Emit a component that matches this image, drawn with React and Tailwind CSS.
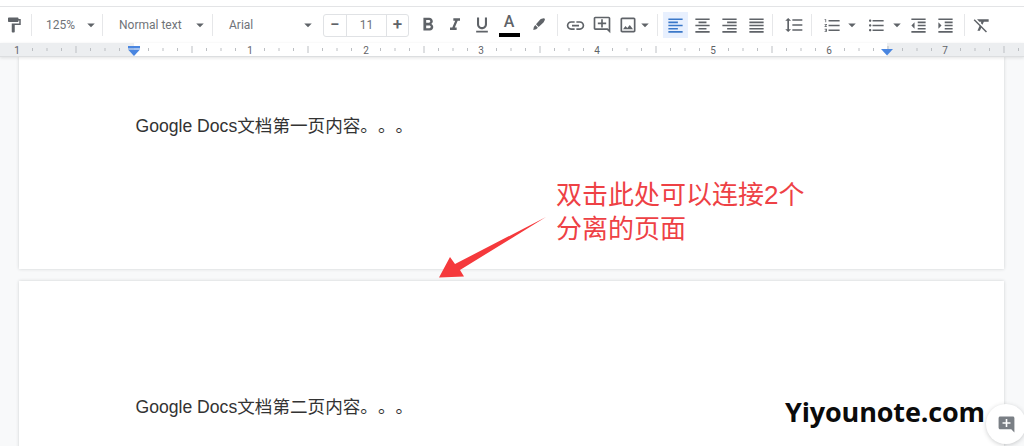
import {
  MdAddComment,
  MdArrowDropDown,
  MdFormatAlignCenter,
  MdFormatAlignJustify,
  MdFormatAlignLeft,
  MdFormatAlignRight,
  MdFormatBold,
  MdFormatClear,
  MdFormatIndentDecrease,
  MdFormatIndentIncrease,
  MdFormatItalic,
  MdFormatLineSpacing,
  MdFormatListBulleted,
  MdFormatListNumbered,
  MdFormatPaint,
  MdFormatUnderlined,
  MdLink,
  MdOutlineAddComment,
  MdOutlineImage,
} from "react-icons/md";

function Sep({ className = "" }) {
  return <div className={`h-[22px] w-px shrink-0 bg-[#e6e7e9] ${className}`} />;
}

function Tool({ icon: Icon, size = 19, className = "" }) {
  return (
    <div className={`flex h-[26px] w-[26px] shrink-0 items-center justify-center text-[#5f6368] ${className}`}>
      <Icon size={size} />
    </div>
  );
}

function Caret({ className = "" }) {
  return <MdArrowDropDown size={18} className={`shrink-0 text-[#5f6368] ${className}`} />;
}

function Select({ label, width, textWidth }) {
  return (
    <div className={`flex shrink-0 items-center pl-4 pr-[2px] text-[12px] text-[#6f7378] ${width}`}>
      <span className={textWidth}>{label}</span>
      <Caret />
    </div>
  );
}

// pen used for the highlight colour button
function Highlighter() {
  return (
    <svg width="16" height="16" viewBox="0 0 16 16" fill="#5f6368">
      <path d="M9.2 3.6a2.2 2.2 0 0 1 1.5-.9l2-.4c.9-.1 1.5.8 1.1 1.6l-.9 1.9a2.4 2.4 0 0 1-.7.9L7.6 11 5 8.2z" />
      <path d="M4.3 9l2.6 2.8-1.7 1.5-2.9.7.5-3z" />
    </svg>
  );
}

function Toolbar() {
  return (
    <div className="flex h-[37px] items-center border-t border-[#e3e4e6] bg-white [font-family:Roboto,sans-serif]">
      <Tool icon={MdFormatPaint} size={18} className="ml-px" />
      <Sep className="ml-1" />
      <div className="flex w-[70px] shrink-0 items-center pl-[14px] text-[12px] text-[#6f7378]">
        <span className="w-[36px]">125%</span>
        <Caret />
      </div>
      <Sep />
      <Select label="Normal text" width="w-[109px]" textWidth="w-[72px]" />
      <Sep />
      <Select label="Arial" width="w-[106px]" textWidth="w-[79px]" />

      <div className="ml-[4px] flex h-[23px] w-[86px] shrink-0 items-center rounded-[3px] border border-[#e0e2e5] text-[#5f6368]">
        <div className="flex h-full w-[23px] items-center justify-center border-r border-[#e0e2e5] text-[17px] font-medium">−</div>
        <div className="flex h-full w-[40px] items-center justify-center border-r border-[#e0e2e5] text-[12px] text-[#6f7378]">11</div>
        <div className="flex h-full flex-1 items-center justify-center text-[17px] font-medium">+</div>
      </div>

      <Tool icon={MdFormatBold} size={22} className="ml-[5px] !w-[27px]" />
      <Tool icon={MdFormatItalic} size={20} className="!w-[27px]" />
      <Tool icon={MdFormatUnderlined} size={20} className="!w-[27px]" />
      <div className="flex h-[26px] w-[28px] shrink-0 flex-col items-center text-[#5f6368]">
        <span className="h-[19px] text-[16px] leading-[20px] font-medium">A</span>
        <div className="mt-[2px] h-[4px] w-[21px] bg-black" />
      </div>
      <div className="ml-[3px] -mt-[3px] flex h-[26px] w-[26px] shrink-0 items-center justify-center">
        <Highlighter />
      </div>
      <Sep className="ml-[5px]" />
      <Tool icon={MdLink} size={21} className="ml-[4px]" />
      <Tool icon={MdOutlineAddComment} size={20} className="ml-px" />
      <Tool icon={MdOutlineImage} size={20} />
      <Caret className="-ml-[5px]" />
      <Sep className="ml-[3px]" />
      <div className="ml-[5px] flex h-[26px] w-[25px] shrink-0 items-center justify-center bg-[#e8f0fe] text-[#3b78c9]">
        <MdFormatAlignLeft size={19} />
      </div>
      <Tool icon={MdFormatAlignCenter} className="ml-px" />
      <Tool icon={MdFormatAlignRight} className="ml-px" />
      <Tool icon={MdFormatAlignJustify} className="ml-px" />
      <Sep className="ml-[3px]" />
      <Tool icon={MdFormatLineSpacing} size={20} className="ml-[8px]" />
      <Sep className="ml-[4px]" />
      <Tool icon={MdFormatListNumbered} className="ml-[7px]" />
      <Caret className="-ml-[2px]" />
      <Tool icon={MdFormatListBulleted} className="ml-[2px]" />
      <Caret className="-ml-px" />
      <Tool icon={MdFormatIndentDecrease} className="-ml-px" />
      <Tool icon={MdFormatIndentIncrease} className="ml-px" />
      <Sep className="ml-[6px]" />
      <Tool icon={MdFormatClear} size={20} className="ml-[4px]" />
    </div>
  );
}

const rulerLabels = [
  [17, 1],
  [250, 1],
  [366, 2],
  [481, 3],
  [597, 4],
  [713, 5],
  [829, 6],
  [945, 7],
];

function Ruler() {
  const ticks = [];
  for (let i = -8; i < 64; i++) {
    if (i % 8 === 0) continue;
    ticks.push({ x: 134 + i * 14.5, long: i % 4 === 0 });
  }
  return (
    <div className="relative h-[14px] border-b border-[#dcdee0] bg-[#eceef0] shadow-[0_1px_3px_rgba(60,64,67,0.14)]">
      <svg width="1024" height="13" className="block">
        <rect x="134" y="0" width="753" height="13" fill="#fff" />
        {ticks.map((t) => (
          <line key={t.x} x1={t.x} x2={t.x} y1={t.long ? 3 : 5} y2={t.long ? 10 : 8} stroke="#bcbfc3" strokeWidth="1" />
        ))}
        {rulerLabels.map(([x, n]) => (
          <text key={x} x={x} y="10.5" textAnchor="middle" fontSize="10" fontFamily="Roboto, sans-serif" fill="#5f6368">
            {n}
          </text>
        ))}
        <rect x="128" y="3" width="12" height="2.5" fill="#4a86e0" />
        <path d="M128 6.5h12l-6 6.5z" fill="#4a86e0" />
        <path d="M881 6h12l-6 6.5z" fill="#4a86e0" />
      </svg>
    </div>
  );
}

function Page({ height, pad, text }) {
  return (
    <div className={`mx-[19px] w-[985px] shrink-0 bg-white shadow-[0_0_3px_rgba(60,64,67,0.22)] ${height} ${pad}`}>
      <p className="pl-[116.5px] text-[17.6px] leading-[24px] text-[#333] [text-spacing-trim:space-all] [font-family:'Liberation_Sans','Noto_Sans_CJK_SC',sans-serif]">
        {text}
      </p>
    </div>
  );
}

export default function App() {
  return (
    <div className="relative h-[446px] w-[1024px] overflow-hidden bg-[#f8f9fa]">
      <div className="h-[6px] bg-white" />
      <Toolbar />
      <Ruler />
      <div className="flex flex-col gap-[12px]">
        <Page height="h-[212px]" pad="pt-[57px]" text="Google Docs文档第一页内容。。。" />
        <Page height="h-[170px]" pad="pt-[114px]" text="Google Docs文档第二页内容。。。" />
      </div>

      {/* annotation over the page */}
      <svg width="1024" height="446" className="pointer-events-none absolute top-0 left-0">
        <path d="M439 277.5L450 257L455 264L546 217L460 270L464 276.5Z" fill="#f5393c" />
      </svg>
      <div className="absolute top-[178px] left-[556px] w-[260px] text-[26px] leading-[34px] text-[#ee4145] [font-family:'Liberation_Sans','Noto_Sans_CJK_SC',sans-serif]">
        双击此处可以连接2个
        <br />
        分离的页面
      </div>
      <div className="absolute top-[393px] left-[785px] text-[27px] leading-[38px] font-bold tracking-[-0.15px] text-[#0b0b0b] [font-family:'Open_Sans',sans-serif]">
        Yiyounote.com
      </div>
      <div className="absolute top-[404px] left-[986px] flex h-[40px] w-[40px] items-center justify-center rounded-full bg-white shadow-[0_1px_4px_rgba(60,64,67,0.25)]">
        <MdAddComment size={19} className="text-[#7a7f85]" />
      </div>
    </div>
  );
}
